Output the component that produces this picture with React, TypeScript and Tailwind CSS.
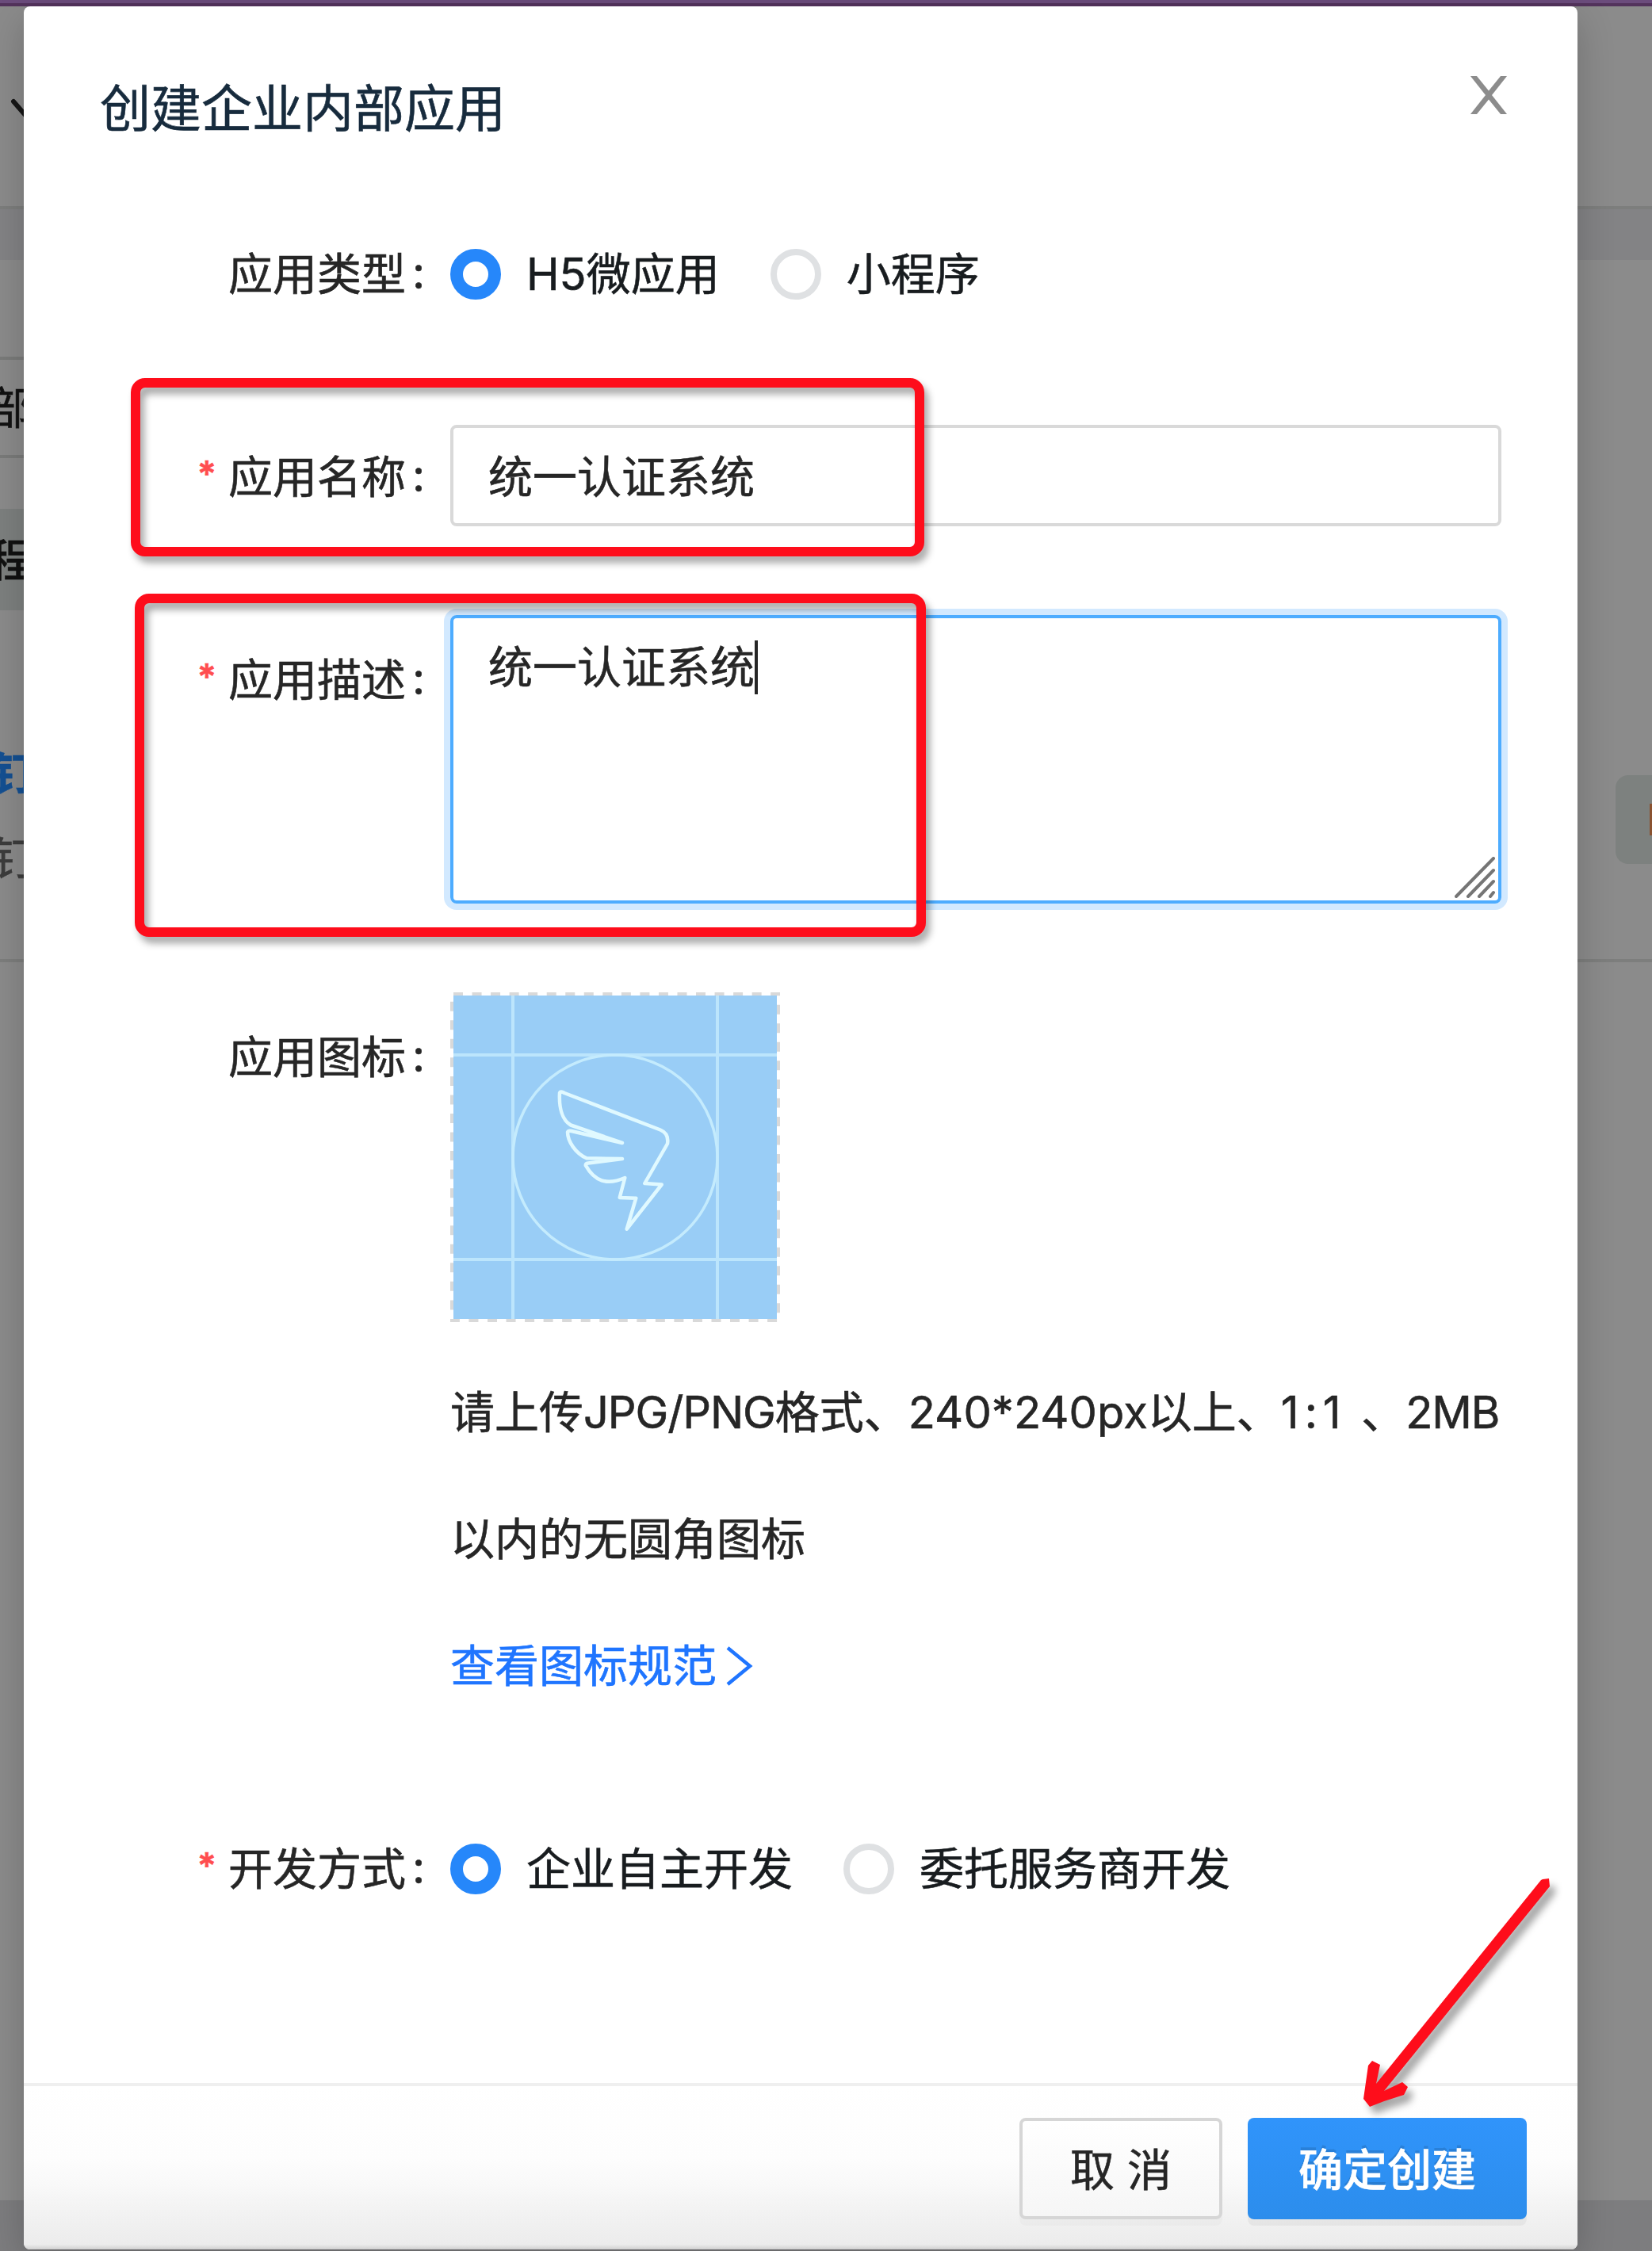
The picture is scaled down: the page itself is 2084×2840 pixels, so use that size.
import type { ReactNode } from "react";

const Label: React.FC<{ text: string; required?: boolean }> = ({ text, required }) => (
    <div className="flex h-[160px] w-[538px] shrink-0 items-center justify-end pr-6 text-[#262626]">
        {required && <span className="relative -top-1 mr-[15px] text-[45px] font-semibold text-[#ff4d4f]">*</span>}
        <span>{text}</span>
        <span className="relative -top-0.5 w-8 text-center">:</span>
    </div>
);

const Radio: React.FC<{ checked?: boolean; children: ReactNode }> = ({ checked, children }) => (
    <div className="flex items-center text-[#181c1f]">
        <span
            className={
                checked
                    ? "size-16 rounded-full border-[16px] border-[#2687fa]"
                    : "size-16 rounded-full border-8 border-[#dfe1e3]"
            }
        />
        <span className="px-8">{children}</span>
    </div>
);

const UploadIcon = () => (
    <svg width="416" height="416" viewBox="0 0 416 416" fill="none" className="block">
        <rect x="2" y="2" width="412" height="412" stroke="#d9d9d9" strokeWidth="4" strokeDasharray="12 11.54" strokeDashoffset="-2" />
        <rect x="4" y="4" width="408" height="408" fill="#99cdf6" />
        <path d="M79 4V412M337 4V412M4 79H412M4 337H412" stroke="#bce5fc" strokeWidth="4" />
        <circle cx="208" cy="208" r="129" stroke="#c4ebfd" strokeWidth="3.5" />
        <path
            d="M144 127L265 173.500Q276 178 274 191L245.300 241L266.700 242.500L222.700 298.700L234.300 259.700L213.700 259L220.300 234C197 244 182 238 171 218.700Q170 216 174 215.500L217 210L172 209.300C158 203 148 188 148 176.300Q149 174 153 175L217 190L152 167.500C141 161 137 145 138 127Q139 124 144 127Z"
            stroke="#e0f9ff"
            strokeWidth="4.5"
            strokeLinejoin="round"
        />
    </svg>
);

const Backdrop = () => (
    <div className="flex h-[2840px] flex-col bg-[#8b8b8b] text-[56px] leading-none">
        <div className="h-1 bg-[#6b4c7c]" />
        <div className="h-1 bg-[#53335c]" />
        <div className="h-[252px] pt-[108px]">
            <svg width="60" height="40" viewBox="0 0 60 40" fill="none">
                <path d="M17 12L36 34L55 12" stroke="#161616" strokeWidth="6" strokeLinecap="round" />
            </svg>
        </div>
        <div className="h-1 bg-[#7d7e7d]" />
        <div className="h-16 bg-[#838385]" />
        <div className="flex h-[882px] justify-between">
            <div className="w-[60px] overflow-hidden whitespace-nowrap">
                <div className="mt-[122px] flex h-[128px] items-center border-y-4 border-[#7a7b7a] text-[#111]">
                    <span className="-ml-[15px] pt-0.5">部</span>
                </div>
                <div className="mt-16 flex h-[128px] items-center bg-[#7d807f] font-medium text-[#111]">
                    <span className="-ml-[15px] pt-0.5">程</span>
                </div>
                <div className="mt-[178px] -ml-[10px] font-bold text-[#145092]">钉</div>
                <div className="mt-[51px] -ml-[10px] text-[#3c3c3c]">钉</div>
            </div>
            <div className="mt-[650px] flex h-28 w-[46px] items-center justify-end rounded-l-2xl bg-[#7d817f]">
                <div className="h-10 w-[3px] bg-[#8a5230]" />
            </div>
        </div>
        <div className="h-1 bg-[#7d7e7d]" />
        <div className="grow" />
        <div className="h-16 bg-[#7d7d7f]" />
    </div>
);

const App = () => {
    return (
        <div className="relative h-[2840px] w-[2084px] overflow-hidden font-['Inter','Noto_Sans_CJK_SC',sans-serif] [-webkit-text-stroke:0.6px]">
            <Backdrop />

            <div className="absolute top-2 left-[30px] flex h-[2830px] w-[1960px] flex-col rounded-lg bg-white text-[56px] leading-[160px] shadow-[0_16px_48px_rgba(0,0,0,0.2)]">
                <div className="flex h-[256px] items-center justify-between pr-[89px] pl-24">
                    <h2 className="pt-px text-[64px] text-[#172b3d]">创建企业内部应用</h2>
                    <svg width="46" height="48" viewBox="0 0 46 48" className="mb-8" fill="#8c8c8c">
                        <path d="M0 0H8L23 18.500L38 0H46L27 24L46 48H38L23 29.500L8 48H0L19 24Z" />
                    </svg>
                </div>

                <div className="mt-0.5 flex h-[160px]">
                    <Label text="应用类型" />
                    <div className="flex items-center gap-8">
                        <Radio checked>H5微应用</Radio>
                        <Radio>小程序</Radio>
                    </div>
                </div>

                <div className="mt-[94px] flex h-[160px] items-center">
                    <div className="pt-[3px]">
                        <Label text="应用名称" required />
                    </div>
                    <div className="flex h-32 w-[1326px] items-center rounded-lg border-4 border-[#d9d9d9] px-11 pt-[3px] text-[#262626]">
                        统一认证系统
                    </div>
                </div>

                <div className="mt-24 flex h-[364px]">
                    <div className="pt-0.5">
                        <Label text="应用描述" required />
                    </div>
                    <div className="relative h-[364px] w-[1326px] rounded-lg border-4 border-[#4dacff] px-11 pt-5 text-[#262626] shadow-[0_0_0_8px_#d2e9ff]">
                        <div className="flex h-[84px] items-center">
                            统一认证系统
                            <span className="h-[68px] w-1 bg-[#262626]" />
                        </div>
                        <svg width="52" height="52" viewBox="0 0 52 52" className="absolute right-[3px] bottom-[3px]" stroke="#757575" strokeWidth="4" strokeLinecap="round">
                            <path d="M2 50L49 2M17 50L49 17M31 50L49 31M45 50L49 45" />
                        </svg>
                    </div>
                </div>

                <div className="mt-28 flex">
                    <div className="pt-0.5">
                        <Label text="应用图标" />
                    </div>
                    <div className="w-[1340px] text-[#262626]">
                        <UploadIcon />
                        <div className="mt-[34px] whitespace-nowrap">
                            请上传<span className="tracking-[-1.1px]">JPG/PNG</span>格式、
                            <span className="tracking-[0.1px] [font-feature-settings:'calt'_0]">240*240px</span>
                            以上、<span className="mr-[3px] tracking-[7px]">1:1</span> 、
                            <span className="tracking-[-1.2px]">2MB</span>
                        </div>
                        <div>以内的无圆角图标</div>
                        <a className="flex items-center text-[#1f75ff]">
                            查看图标规范
                            <svg width="34" height="50" viewBox="0 0 34 50" className="ml-3" fill="none" stroke="#1f75ff" strokeWidth="4.5">
                                <path d="M2 2L30 25L2 48" />
                            </svg>
                        </a>
                    </div>
                </div>

                <div className="mt-24 flex h-[160px]">
                    <Label text="开发方式" required />
                    <div className="flex items-center gap-8">
                        <Radio checked>企业自主开发</Radio>
                        <Radio>委托服务商开发</Radio>
                    </div>
                </div>

                <div className="mt-auto flex h-[210px] items-start justify-end gap-8 rounded-b-lg border-t-4 border-[#efefef] bg-[linear-gradient(to_bottom,#fff_0%,#fdfdfd_44%,#f9f9f9_60%,#f3f3f3_75%,#ececec_97%,#cfcfcf_100%)] pt-10 pr-16">
                    <button className="flex h-32 w-64 items-center justify-center gap-4 rounded-lg border-4 border-[#d6d6d6] bg-linear-to-b from-white to-[#f6f6f6] pt-[3px] text-[#262626] shadow-[0_8px_0_rgba(0,0,0,0.02)]">
                        <span>取</span>
                        <span>消</span>
                    </button>
                    <button className="flex h-32 w-[352px] items-center justify-center rounded-lg bg-linear-to-b from-[#3094fb] to-[#2c8dec] pt-[3px] font-medium text-white shadow-[0_8px_0_rgba(0,0,0,0.045)] [text-shadow:0_-4px_0_rgba(0,0,0,0.12)]">
                        确定创建
                    </button>
                </div>
            </div>

            {/* annotations */}
            <div className="absolute top-[477px] left-[165px] h-[225px] w-[1001px] rounded-[18px] border-[12px] border-[#fe0d1b] drop-shadow-[5px_8px_5px_rgba(0,0,0,0.35)]" />
            <div className="absolute top-[749px] left-[170px] h-[433px] w-[998px] rounded-[18px] border-[12px] border-[#fe0d1b] drop-shadow-[5px_8px_5px_rgba(0,0,0,0.35)]" />
            <svg width="280" height="320" viewBox="0 0 280 320" className="absolute top-[2360px] left-[1700px] drop-shadow-[7px_9px_5px_rgba(0,0,0,0.35)]">
                <path
                    d="M246 11L254 10L255 20L46 278L69 267L76 273L71 283L46 291L28 298L20 288L26 246L31 240L41 245L36 269L244 12Z"
                    fill="#fe0d1b"
                />
            </svg>
        </div>
    );
};

export default App;
